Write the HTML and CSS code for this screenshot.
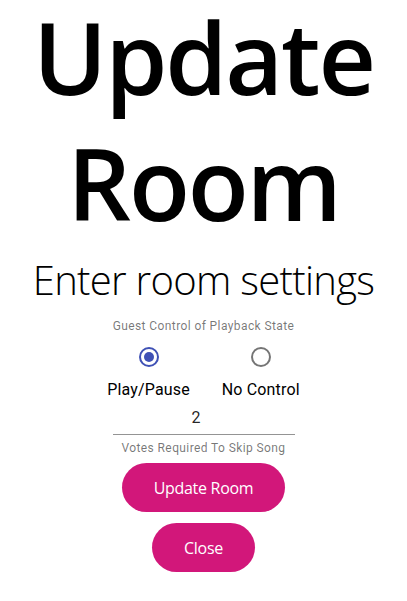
FILE: index.html
```html
<!DOCTYPE html>
<html lang="en">
<head>
<meta charset="utf-8">
<title>Update Room</title>
<link rel="stylesheet" href="styles.css">
</head>
<body>
<main class="page">
  <h1 class="title">Update Room</h1>
  <h2 class="subtitle">Enter room settings</h2>
  <div class="control">
    <p class="helper">Guest Control of Playback State</p>
    <div class="radio-group">
      <label class="radio-item">
        <span class="radio">
          <svg viewBox="0 0 24 24" width="24" height="24" class="radio-icon checked"><circle cx="12" cy="12" r="9" fill="none" stroke="currentColor" stroke-width="2"/><circle cx="12" cy="12" r="5" fill="currentColor"/></svg>
        </span>
        <span class="radio-label">Play/Pause</span>
      </label>
      <label class="radio-item">
        <span class="radio">
          <svg viewBox="0 0 24 24" width="24" height="24" class="radio-icon"><circle cx="12" cy="12" r="9" fill="none" stroke="currentColor" stroke-width="2"/></svg>
        </span>
        <span class="radio-label">No Control</span>
      </label>
    </div>
  </div>
  <div class="field">
    <input class="field-input" type="text" value="2">
    <p class="helper field-helper">Votes Required To Skip Song</p>
  </div>
  <div class="actions">
    <button class="btn">Update Room</button>
    <button class="btn">Close</button>
  </div>
</main>
</body>
</html>
```
FILE: styles.css
```css
html, body {
  margin: 0;
  padding: 0;
  background: #ffffff;
}

.page {
  display: flex;
  flex-direction: column;
  align-items: center;
  text-align: center;
  color: #000;
}

.title {
  margin: -7px 0 0 0;
  font-family: "Open Sans", sans-serif;
  font-weight: 600;
  font-size: 100px;
  line-height: 126px;
  letter-spacing: -2.2px;
}

.subtitle {
  margin: 8px 0 0 0;
  font-family: "Open Sans", sans-serif;
  font-weight: 300;
  font-size: 40px;
  line-height: 54px;
  letter-spacing: -0.7px;
}

.control {
  display: flex;
  flex-direction: column;
  align-items: center;
  margin-top: 9px;
}

.helper {
  margin: 0;
  font-family: Roboto, sans-serif;
  font-size: 12px;
  line-height: 20px;
  letter-spacing: 0.4px;
  color: rgba(0, 0, 0, 0.54);
}

.radio-group {
  display: flex;
  flex-direction: row;
}

.radio-item {
  display: flex;
  flex-direction: column;
  align-items: center;
  margin: 0 16px;
}

.radio {
  display: flex;
  padding: 9px;
}

.radio-icon {
  display: block;
  color: rgba(0, 0, 0, 0.54);
}

.radio-icon.checked {
  color: #3f51b5;
}

.radio-label {
  font-family: Roboto, sans-serif;
  font-size: 16px;
  line-height: 24px;
  letter-spacing: 0.15px;
}

.field {
  display: flex;
  flex-direction: column;
  align-items: center;
  margin-top: 0;
}

.field-input {
  width: 167px;
  box-sizing: content-box;
  margin: 0;
  padding: 6px 15px 7px 0;
  height: 19px;
  border: 0;
  border-bottom: 1px solid rgba(0, 0, 0, 0.42);
  outline: none;
  background: transparent;
  text-align: center;
  font-family: Roboto, sans-serif;
  font-size: 16px;
  color: rgba(0, 0, 0, 0.87);
}

.field-helper {
  margin-top: 3px;
}

.actions {
  display: flex;
  flex-direction: column;
  align-items: center;
  gap: 11px;
  margin-top: 5px;
}

.btn {
  height: 49px;
  padding: 0 32px;
  border: 0;
  border-radius: 25px;
  background: #d2177a;
  color: #ffffff;
  font-family: "Open Sans", sans-serif;
  font-size: 16px;
  letter-spacing: -0.3px;
  cursor: pointer;
}
```
